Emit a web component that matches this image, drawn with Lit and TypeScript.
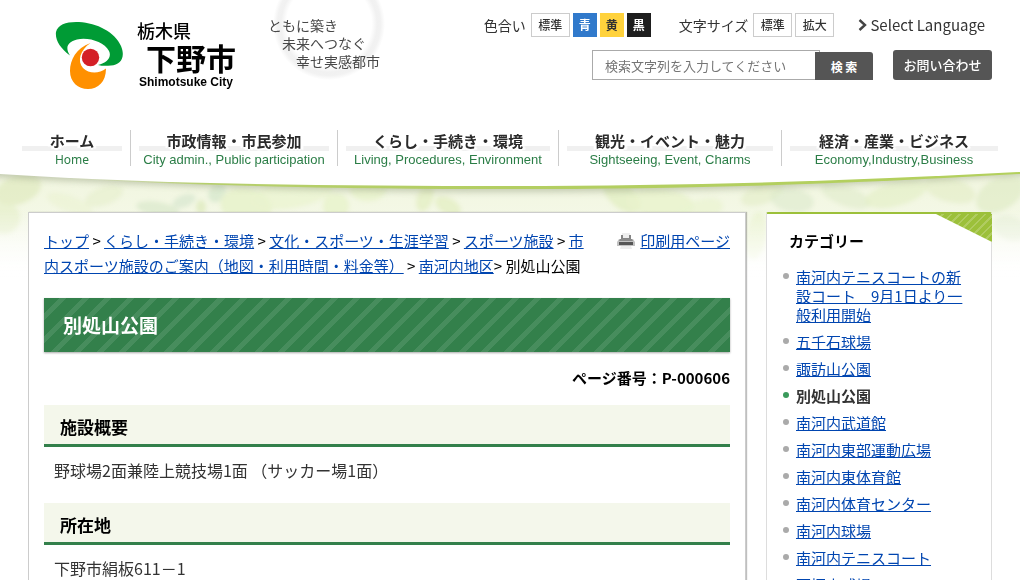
import { LitElement, html, css, svg } from "lit";
import { customElement } from "lit/decorators.js";
import { classMap } from "lit/directives/class-map.js";

interface NavItem {
  ja: string;
  en: string;
}

const NAV: NavItem[] = [
  { ja: "ホーム", en: "Home" },
  { ja: "市政情報・市民参加", en: "City admin., Public participation" },
  { ja: "くらし・手続き・環境", en: "Living, Procedures, Environment" },
  { ja: "観光・イベント・魅力", en: "Sightseeing, Event, Charms" },
  { ja: "経済・産業・ビジネス", en: "Economy,Industry,Business" },
];

const CATEGORIES = [
  "南河内テニスコートの新設コート　9月1日より一般利用開始",
  "五千石球場",
  "諏訪山公園",
  "別処山公園",
  "南河内武道館",
  "南河内東部運動広場",
  "南河内東体育館",
  "南河内体育センター",
  "南河内球場",
  "南河内テニスコート",
  "西坪山球場",
];

const CURRENT = "別処山公園";

// x, y, rx, ry, rotation, colour, opacity of each leaf in the backdrop
const LEAVES: [number, number, number, number, number, string, number][] = [
  [18, 190, 24, 14, -20, "#dfeabf", 0.7],
  [4, 218, 16, 16, 30, "#e6f0ca", 0.7],
  [70, 204, 24, 8, 20, "#e6f0c8", 0.4],
  [104, 196, 20, 9, -20, "#e4eec8", 0.5],
  [158, 209, 22, 7, 10, "#d6e6c6", 0.6],
  [184, 201, 12, 6, -20, "#d2e4cc", 0.6],
  [217, 193, 8, 10, 40, "#d3e5cb", 0.7],
  [246, 206, 26, 18, 10, "#e8f2cc", 0.9],
  [201, 207, 5, 7, 0, "#dfebbf", 0.8],
  [292, 194, 42, 14, -10, "#e9f3ce", 0.7],
  [336, 206, 13, 13, 0, "#e9f3cd", 0.9],
  [368, 190, 18, 11, 0, "#e9f3cd", 0.9],
  [425, 198, 8, 14, 20, "#e5f0c8", 0.9],
  [448, 206, 14, 8, 30, "#e5f0c8", 0.9],
  [622, 196, 22, 12, 40, "#e4efc6", 0.9],
  [660, 203, 34, 14, 5, "#e8f2cc", 0.8],
  [700, 212, 24, 12, -20, "#e9f3d0", 0.7],
  [756, 236, 10, 24, 8, "#e8f2cc", 0.7],
  [762, 194, 22, 10, -20, "#e2edc6", 0.6],
  [792, 200, 22, 12, 10, "#dce9cc", 0.6],
  [846, 196, 26, 10, 20, "#dfebca", 0.6],
  [896, 194, 32, 12, -15, "#e4efc8", 0.7],
  [950, 190, 26, 12, 15, "#e2edc4", 0.6],
  [1000, 194, 26, 16, -30, "#dfebc6", 0.7],
  [1010, 228, 18, 12, 20, "#e2ecd2", 0.6],
];

@customElement("site-backdrop")
export class SiteBackdrop extends LitElement {
  static styles = css`
    :host {
      display: block;
    }
    .art {
      display: block;
      width: 100%;
      height: 300px;
    }
  `;

  render() {
    return html`
      <svg class="art" viewBox="0 0 1020 300" preserveAspectRatio="none" aria-hidden="true">
        <defs>
          <linearGradient id="wash" x1="0" y1="0" x2="0" y2="1">
            <stop offset="0.55" stop-color="#f0f5de" />
            <stop offset="0.72" stop-color="#f4f8e6" />
            <stop offset="0.97" stop-color="#ffffff" />
          </linearGradient>
          <linearGradient id="fade" x1="0" y1="0" x2="0" y2="1">
            <stop offset="0.7" stop-color="#ffffff" stop-opacity="0" />
            <stop offset="0.93" stop-color="#ffffff" />
          </linearGradient>
          <linearGradient id="rim" x1="0" y1="0" x2="1" y2="0">
            <stop offset="0.05" stop-color="#d5dcc4" stop-opacity="0.2" />
            <stop offset="0.2" stop-color="#b6cf6c" />
            <stop offset="0.5" stop-color="#b3ce62" />
            <stop offset="1" stop-color="#b3d05c" />
          </linearGradient>
          <filter id="soft" x="-5%" y="-20%" width="110%" height="140%">
            <feGaussianBlur stdDeviation="2" />
          </filter>
          <filter id="shade" x="-5%" y="-20%" width="110%" height="140%">
            <feGaussianBlur stdDeviation="3" />
          </filter>
        </defs>
        <rect width="1020" height="300" fill="url(#wash)" />
        <g filter="url(#soft)">
          ${LEAVES.map(
            ([x, y, rx, ry, turn, fill, opacity]) => svg`
              <ellipse cx=${x} cy=${y} rx=${rx} ry=${ry} fill=${fill} opacity=${opacity}
                transform="rotate(${turn} ${x} ${y})" />`
          )}
        </g>
        <rect width="1020" height="300" fill="url(#fade)" />
        <path d="M-20 0H1040V174C860 186 700 192 510 192S150 186-20 176Z" fill="#8d9878" opacity="0.45" filter="url(#shade)" />
        <path d="M0 0H1020V174C850 184 690 189 510 189S150 185 0 174Z" fill="url(#rim)" />
        <path d="M0 0H1020V172C850 181 690 186 510 186S150 184 0 174Z" fill="#ffffff" />
      </svg>
    `;
  }
}

@customElement("site-header")
export class SiteHeader extends LitElement {
  static styles = css`
    :host {
      display: block;
    }
    .bar {
      display: flex;
      justify-content: space-between;
      align-items: flex-start;
      height: 130px;
      padding: 0 28px;
    }
    .brand {
      display: flex;
      align-items: flex-start;
    }
    .logo {
      display: flex;
      gap: 12px;
      width: 208px;
      padding: 20px 0 0 27px;
      color: #000;
      text-decoration: none;
    }
    .mark {
      width: 70px;
      height: 70px;
      flex: none;
    }
    .name {
      display: flex;
      flex-direction: column;
    }
    .pref {
      font-size: 18px;
      line-height: 20px;
      font-weight: 500;
    }
    .city {
      padding-left: 9px;
      font-size: 30px;
      line-height: 34px;
      font-weight: 700;
    }
    .roman {
      font: 700 12px/16px "Liberation Sans", sans-serif;
      padding-left: 2px;
      white-space: nowrap;
    }
    .slogan {
      display: grid;
      width: 140px;
      margin-left: -9px;
      color: #484848;
      font-size: 14px;
      line-height: 18px;
    }
    .ring {
      grid-area: 1 / 1;
      width: 140px;
      height: 84px;
    }
    .lines {
      grid-area: 1 / 1;
      margin: 0;
      padding: 16px 0 0 14px;
      white-space: nowrap;
    }
    .lines span {
      display: block;
    }
    .lines .second {
      padding-left: 14px;
    }
    .lines .third {
      padding-left: 28px;
    }
    .tools {
      display: flex;
      flex-direction: column;
      align-items: flex-end;
      gap: 13px;
      padding-top: 13px;
      color: #333;
    }
    .row {
      display: flex;
      align-items: center;
    }
    .settings {
      gap: 28px;
      padding-right: 7px;
      height: 24px;
    }
    .group {
      display: flex;
      align-items: center;
      gap: 3px;
      font-size: 14px;
      white-space: nowrap;
    }
    .label {
      padding-right: 2px;
    }
    button {
      font-family: inherit;
      cursor: pointer;
      margin: 0;
    }
    .chip {
      box-sizing: border-box;
      height: 24px;
      min-width: 24px;
      padding: 0 5px;
      border: 1px solid #ccc;
      background: #fff;
      color: #333;
      font-size: 12px;
      line-height: 22px;
      font-weight: 500;
    }
    .wide {
      width: 39px;
    }
    .blue {
      background: #3079cb;
      border-color: #3079cb;
      color: #fff;
      font-weight: 700;
    }
    .yellow {
      background: #ffd23c;
      border-color: #ffd23c;
      font-weight: 700;
    }
    .black {
      background: #1e1e1e;
      border-color: #1e1e1e;
      color: #fff;
      font-weight: 700;
    }
    .language {
      display: flex;
      align-items: center;
      gap: 2px;
      margin-left: -4px;
      color: #333;
      font-size: 15px;
      line-height: 24px;
      text-decoration: none;
    }
    .chevron {
      width: 10px;
      height: 14px;
    }
    .search-row {
      gap: 20px;
    }
    .search {
      display: flex;
      align-items: flex-end;
    }
    .query {
      box-sizing: border-box;
      width: 228px;
      height: 30px;
      margin: 0;
      padding: 0 12px;
      border: 1px solid #aaa;
      background: #fff;
      font-family: inherit;
      font-size: 13px;
    }
    .query::placeholder {
      color: #757575;
    }
    .go {
      height: 28px;
      width: 58px;
      margin-left: -5px;
      border: 0;
      border-radius: 0 3px 0 0;
      padding: 0;
      background: #555;
      color: #fff;
      font-size: 12px;
      font-weight: 700;
      z-index: 1;
    }
    .contact {
      display: block;
      width: 99px;
      border-radius: 3px;
      background: #555;
      color: #fff;
      font-size: 13px;
      line-height: 30px;
      font-weight: 500;
      text-align: center;
      text-decoration: none;
    }
    .nav {
      display: grid;
      grid-template-columns: 116fr 207fr 221fr 223fr 225fr;
      margin: 0;
      padding: 0 14px;
      list-style: none;
    }
    .cell {
      box-sizing: border-box;
      height: 36px;
      padding: 0 8px;
      border-left: 1px solid #ccc;
    }
    .cell:first-child {
      border-color: transparent;
      padding-left: 7px;
    }
    .link {
      display: block;
      text-align: center;
      text-decoration: none;
      white-space: nowrap;
      background: linear-gradient(#f0f0f0, #f0f0f0) 0 16px / 100% 5px no-repeat;
    }
    .ja {
      display: block;
      color: #2b2b2b;
      font-size: 15px;
      line-height: 22px;
      font-weight: 700;
      text-shadow: 2px 0 1px #fff, -2px 0 1px #fff, 0 2px 1px #fff, 0 -2px 1px #fff, 3px 1px 1px #fff, -3px 1px 1px #fff;
    }
    .en {
      display: block;
      color: #2a7d46;
      font: 13px/16px "Liberation Sans", sans-serif;
    }
    .cell:first-child .en {
      font: 12px/16px "Noto Sans", sans-serif;
    }
  `;

  render() {
    return html`
      <header>
        <div class="bar">
          <div class="brand">
            <a class="logo" href="#">
              <svg class="mark" viewBox="0 0 70 70" aria-hidden="true">
                <path d="M15 35.500C5 28 0 20 1 12C3 4 12 1.500 24 2C42 3 60 12 66 26C71 38 65 45 56 45.500C51 46 47 46 43 45C52 43 57 37 54 31C49 22 34 17 22 19.500C12 22 10 28 15 35.500Z" fill="#009b35" />
                <path d="M35.500 23C21 28 15 40 15 51C15 62 23 69 33 69C43 69 51 62 51 48.500C44 54 34 54 28 48C22 41 25 30 35.500 23Z" fill="#ff9000" />
                <circle cx="35.500" cy="37.500" r="8.700" fill="#d42027" />
              </svg>
              <span class="name">
                <span class="pref">栃木県</span>
                <span class="city">下野市</span>
                <span class="roman">Shimotsuke City</span>
              </span>
            </a>
            <div class="slogan">
              <svg class="ring" viewBox="0 0 140 84" aria-hidden="true">
                <defs>
                  <radialGradient id="halo">
                    <stop offset="0.76" stop-color="#fff" />
                    <stop offset="0.86" stop-color="#f1f1f1" />
                    <stop offset="0.92" stop-color="#f2f2f2" />
                    <stop offset="1" stop-color="#fff" />
                  </radialGradient>
                </defs>
                <circle cx="75" cy="24" r="56" fill="url(#halo)" />
              </svg>
              <p class="lines">
                <span>ともに築き</span>
                <span class="second">未来へつなぐ</span>
                <span class="third">幸せ実感都市</span>
              </p>
            </div>
          </div>
          <div class="tools">
            <div class="row settings">
              <div class="group" role="group" aria-label="色合い">
                <span class="label">色合い</span>
                <button class="chip wide" type="button">標準</button>
                <button class="chip blue" type="button">青</button>
                <button class="chip yellow" type="button">黄</button>
                <button class="chip black" type="button">黒</button>
              </div>
              <div class="group" role="group" aria-label="文字サイズ">
                <span class="label">文字サイズ</span>
                <button class="chip wide" type="button">標準</button>
                <button class="chip wide" type="button">拡大</button>
              </div>
              <a class="language" href="#">
                <svg class="chevron" viewBox="0 0 10 14" aria-hidden="true">
                  <path d="M1.500 2L7 7L1.500 12" fill="none" stroke="#444" stroke-width="2.400" />
                </svg>
                Select Language
              </a>
            </div>
            <div class="row search-row">
              <form class="search" @submit=${(e: Event) => e.preventDefault()}>
                <input class="query" type="text" aria-label="検索" placeholder="検索文字列を入力してください" />
                <button class="go" type="submit">検 索</button>
              </form>
              <a class="contact" href="#">お問い合わせ</a>
            </div>
          </div>
        </div>
        <nav>
          <ul class="nav">
            ${NAV.map(
              (item) => html`
                <li class="cell">
                  <a class="link" href="#"><span class="ja">${item.ja}</span><span class="en">${item.en}</span></a>
                </li>
              `
            )}
          </ul>
        </nav>
      </header>
    `;
  }
}

@customElement("park-article")
export class ParkArticle extends LitElement {
  static styles = css`
    :host {
      display: block;
      box-sizing: border-box;
      padding: 15px 15px 40px;
      border: 1px solid #ccc;
      background: #fff;
      box-shadow: 1px 0 1px rgba(0, 0, 0, 0.25);
      color: #000;
    }
    a {
      color: #0045b0;
    }
    .top {
      display: flex;
      align-items: flex-start;
      justify-content: space-between;
      gap: 24px;
      font-size: 15px;
      line-height: 25px;
    }
    .crumbs {
      flex: 1;
    }
    .print {
      display: flex;
      align-items: center;
      gap: 5px;
      white-space: nowrap;
    }
    .printer {
      width: 18px;
      height: 18px;
    }
    .title {
      margin: 20px 0 0;
      padding: 0 19px;
      color: #fff;
      font-size: 19px;
      line-height: 54px;
      font-weight: 700;
      background: repeating-linear-gradient(135deg, #33804b 0 11px, #478d5d 11px 16px);
      box-shadow: 0 1px 2px rgba(0, 0, 0, 0.35);
    }
    .number {
      margin: 14px 0 15px;
      font-size: 15px;
      line-height: 24px;
      font-weight: 700;
      text-align: right;
    }
    .heading {
      margin: 0;
      padding: 5px 16px 1px;
      border-bottom: 3px solid #33804b;
      background: #f4f7eb;
      font-size: 17px;
      line-height: 33px;
      font-weight: 700;
    }
    .text {
      margin: 11px 0 21px;
      padding: 0 10px;
      color: #333;
      font-size: 16px;
      line-height: 24px;
    }
  `;

  render() {
    return html`
      <main>
        <div class="top">
          <nav class="crumbs">
            <a href="#">トップ</a> &gt; <a href="#">くらし・手続き・環境</a> &gt;
            <a href="#">文化・スポーツ・生涯学習</a> &gt; <a href="#">スポーツ施設</a> &gt;
            <a href="#">市内スポーツ施設のご案内（地図・利用時間・料金等）</a> &gt;
            <a href="#">南河内地区</a>&gt; 別処山公園
          </nav>
          <div class="print">
            <svg class="printer" viewBox="0 0 18 18" aria-hidden="true">
              <path d="M5 1H13V7H5Z" fill="#eeeeee" />
              <path d="M4 3H6V6H12V3H14V8H4Z" fill="#858585" />
              <path d="M2 7H16L18 10V14H0V10Z" fill="#c2c2c2" />
              <path d="M3 7H15L16 9H2Z" fill="#8a8a8a" />
              <path d="M2 10H16V13H2Z" fill="#555555" />
              <path d="M4 14H14L15 17H3Z" fill="#ececec" />
            </svg>
            <a href="#">印刷用ページ</a>
          </div>
        </div>
        <h1 class="title">別処山公園</h1>
        <p class="number">ページ番号：P-000606</p>
        <h2 class="heading">施設概要</h2>
        <p class="text">野球場2面兼陸上競技場1面 （サッカー場1面）</p>
        <h2 class="heading">所在地</h2>
        <p class="text">下野市絹板611－1</p>
      </main>
    `;
  }
}

@customElement("category-menu")
export class CategoryMenu extends LitElement {
  static styles = css`
    :host {
      display: block;
      box-sizing: border-box;
      border: 1px solid #ddd;
      border-top: 2px solid #9cc03a;
      border-radius: 2px 2px 0 0;
      background: #fff;
    }
    .head {
      display: flex;
      justify-content: space-between;
      align-items: flex-start;
      height: 53px;
    }
    .title {
      margin: 0;
      padding: 16px 0 0 22px;
      color: #000;
      font-size: 15px;
      line-height: 22px;
      font-weight: 700;
    }
    .corner {
      width: 56px;
      height: 28px;
      margin-right: -1px;
      background: repeating-linear-gradient(135deg, #9cc03a 0 4px, #b0cc60 4px 6px);
      clip-path: polygon(0 0, 100% 0, 100% 100%);
    }
    .list {
      margin: 0;
      padding: 0 20px 20px 16px;
      list-style: none;
      font-size: 15px;
      line-height: 19px;
    }
    .item {
      display: flex;
      align-items: flex-start;
      gap: 7px;
      margin-bottom: 8px;
    }
    .item::before {
      content: "";
      flex: none;
      width: 6px;
      height: 6px;
      margin-top: 6px;
      border-radius: 50%;
      background: #aaa;
    }
    .current {
      color: #333;
      font-weight: 700;
    }
    .current::before {
      background: #3a9a5b;
    }
    a {
      color: #0045b0;
    }
  `;

  render() {
    return html`
      <aside>
        <div class="head">
          <h2 class="title">カテゴリー</h2>
          <span class="corner"></span>
        </div>
        <ul class="list">
          ${CATEGORIES.map((name) => {
            const current = name === CURRENT;
            return html`<li class=${classMap({ item: true, current })}>
              ${current ? html`<span>${name}</span>` : html`<a href="#">${name}</a>`}
            </li>`;
          })}
        </ul>
      </aside>
    `;
  }
}

@customElement("app-root")
export class AppRoot extends LitElement {
  static styles = css`
    :host {
      display: block;
      height: 100vh;
      overflow-y: auto;
      scrollbar-width: none;
      background: #fff;
      font-family: "Noto Sans CJK JP", sans-serif;
    }
    .page {
      display: grid;
      grid-template-columns: minmax(0, 1fr);
      align-items: start;
    }
    .backdrop,
    .content {
      grid-area: 1 / 1;
    }
    .content {
      isolation: isolate;
    }
    .columns {
      display: grid;
      grid-template-columns: minmax(0, 1fr) 226px;
      gap: 20px;
      padding: 46px 28px 40px;
    }
  `;

  render() {
    return html`
      <div class="page">
        <site-backdrop class="backdrop"></site-backdrop>
        <div class="content">
          <site-header></site-header>
          <div class="columns">
            <park-article></park-article>
            <category-menu></category-menu>
          </div>
        </div>
      </div>
    `;
  }
}
